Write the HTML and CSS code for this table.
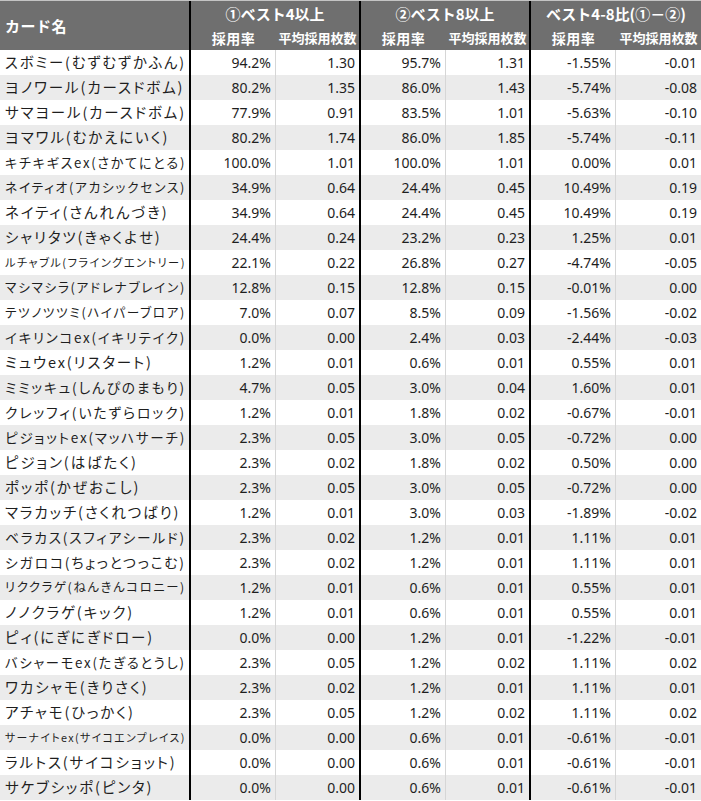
FILE: index.html
```html
<!DOCTYPE html>
<html lang="ja">
<head>
<meta charset="utf-8">
<title>採用率表</title>
<link rel="stylesheet" href="styles.css">
</head>
<body>
<div class="sheet">
  <div class="head">
    <div class="h-name">カード名</div>
    <div class="h-group sep">①ベスト4以上</div>
    <div class="h-group sep">②ベスト8以上</div>
    <div class="h-group">ベスト4-8比(①－②)</div>
    <div class="h-sub">採用率</div><div class="h-sub long sep">平均採用枚数</div>
    <div class="h-sub">採用率</div><div class="h-sub long sep">平均採用枚数</div>
    <div class="h-sub">採用率</div><div class="h-sub long">平均採用枚数</div>
  </div>
  <div class="body">
    <div class="row"><div class="name"><span>スボミー(むずむずかふん)</span></div><div class="num">94.2%</div><div class="num sep">1.30</div><div class="num">95.7%</div><div class="num sep">1.31</div><div class="num">-1.55%</div><div class="num last">-0.01</div></div>
    <div class="row"><div class="name"><span>ヨノワール(カースドボム)</span></div><div class="num">80.2%</div><div class="num sep">1.35</div><div class="num">86.0%</div><div class="num sep">1.43</div><div class="num">-5.74%</div><div class="num last">-0.08</div></div>
    <div class="row"><div class="name"><span>サマヨール(カースドボム)</span></div><div class="num">77.9%</div><div class="num sep">0.91</div><div class="num">83.5%</div><div class="num sep">1.01</div><div class="num">-5.63%</div><div class="num last">-0.10</div></div>
    <div class="row"><div class="name"><span>ヨマワル(むかえにいく)</span></div><div class="num">80.2%</div><div class="num sep">1.74</div><div class="num">86.0%</div><div class="num sep">1.85</div><div class="num">-5.74%</div><div class="num last">-0.11</div></div>
    <div class="row"><div class="name"><span>キチキギスex(さかてにとる)</span></div><div class="num">100.0%</div><div class="num sep">1.01</div><div class="num">100.0%</div><div class="num sep">1.01</div><div class="num">0.00%</div><div class="num last">0.01</div></div>
    <div class="row"><div class="name"><span>ネイティオ(アカシックセンス)</span></div><div class="num">34.9%</div><div class="num sep">0.64</div><div class="num">24.4%</div><div class="num sep">0.45</div><div class="num">10.49%</div><div class="num last">0.19</div></div>
    <div class="row"><div class="name"><span>ネイティ(さんれんづき)</span></div><div class="num">34.9%</div><div class="num sep">0.64</div><div class="num">24.4%</div><div class="num sep">0.45</div><div class="num">10.49%</div><div class="num last">0.19</div></div>
    <div class="row"><div class="name"><span>シャリタツ(きゃくよせ)</span></div><div class="num">24.4%</div><div class="num sep">0.24</div><div class="num">23.2%</div><div class="num sep">0.23</div><div class="num">1.25%</div><div class="num last">0.01</div></div>
    <div class="row"><div class="name"><span>ルチャブル(フライングエントリー)</span></div><div class="num">22.1%</div><div class="num sep">0.22</div><div class="num">26.8%</div><div class="num sep">0.27</div><div class="num">-4.74%</div><div class="num last">-0.05</div></div>
    <div class="row"><div class="name"><span>マシマシラ(アドレナブレイン)</span></div><div class="num">12.8%</div><div class="num sep">0.15</div><div class="num">12.8%</div><div class="num sep">0.15</div><div class="num">-0.01%</div><div class="num last">0.00</div></div>
    <div class="row"><div class="name"><span>テツノツツミ(ハイパーブロア)</span></div><div class="num">7.0%</div><div class="num sep">0.07</div><div class="num">8.5%</div><div class="num sep">0.09</div><div class="num">-1.56%</div><div class="num last">-0.02</div></div>
    <div class="row"><div class="name"><span>イキリンコex(イキリテイク)</span></div><div class="num">0.0%</div><div class="num sep">0.00</div><div class="num">2.4%</div><div class="num sep">0.03</div><div class="num">-2.44%</div><div class="num last">-0.03</div></div>
    <div class="row"><div class="name"><span>ミュウex(リスタート)</span></div><div class="num">1.2%</div><div class="num sep">0.01</div><div class="num">0.6%</div><div class="num sep">0.01</div><div class="num">0.55%</div><div class="num last">0.01</div></div>
    <div class="row"><div class="name"><span>ミミッキュ(しんぴのまもり)</span></div><div class="num">4.7%</div><div class="num sep">0.05</div><div class="num">3.0%</div><div class="num sep">0.04</div><div class="num">1.60%</div><div class="num last">0.01</div></div>
    <div class="row"><div class="name"><span>クレッフィ(いたずらロック)</span></div><div class="num">1.2%</div><div class="num sep">0.01</div><div class="num">1.8%</div><div class="num sep">0.02</div><div class="num">-0.67%</div><div class="num last">-0.01</div></div>
    <div class="row"><div class="name"><span>ピジョットex(マッハサーチ)</span></div><div class="num">2.3%</div><div class="num sep">0.05</div><div class="num">3.0%</div><div class="num sep">0.05</div><div class="num">-0.72%</div><div class="num last">0.00</div></div>
    <div class="row"><div class="name"><span>ピジョン(はばたく)</span></div><div class="num">2.3%</div><div class="num sep">0.02</div><div class="num">1.8%</div><div class="num sep">0.02</div><div class="num">0.50%</div><div class="num last">0.00</div></div>
    <div class="row"><div class="name"><span>ポッポ(かぜおこし)</span></div><div class="num">2.3%</div><div class="num sep">0.05</div><div class="num">3.0%</div><div class="num sep">0.05</div><div class="num">-0.72%</div><div class="num last">0.00</div></div>
    <div class="row"><div class="name"><span>マラカッチ(さくれつばり)</span></div><div class="num">1.2%</div><div class="num sep">0.01</div><div class="num">3.0%</div><div class="num sep">0.03</div><div class="num">-1.89%</div><div class="num last">-0.02</div></div>
    <div class="row"><div class="name"><span>ベラカス(スフィアシールド)</span></div><div class="num">2.3%</div><div class="num sep">0.02</div><div class="num">1.2%</div><div class="num sep">0.01</div><div class="num">1.11%</div><div class="num last">0.01</div></div>
    <div class="row"><div class="name"><span>シガロコ(ちょっとつっこむ)</span></div><div class="num">2.3%</div><div class="num sep">0.02</div><div class="num">1.2%</div><div class="num sep">0.01</div><div class="num">1.11%</div><div class="num last">0.01</div></div>
    <div class="row"><div class="name"><span>リククラゲ(ねんきんコロニー)</span></div><div class="num">1.2%</div><div class="num sep">0.01</div><div class="num">0.6%</div><div class="num sep">0.01</div><div class="num">0.55%</div><div class="num last">0.01</div></div>
    <div class="row"><div class="name"><span>ノノクラゲ(キック)</span></div><div class="num">1.2%</div><div class="num sep">0.01</div><div class="num">0.6%</div><div class="num sep">0.01</div><div class="num">0.55%</div><div class="num last">0.01</div></div>
    <div class="row"><div class="name"><span>ピィ(にぎにぎドロー)</span></div><div class="num">0.0%</div><div class="num sep">0.00</div><div class="num">1.2%</div><div class="num sep">0.01</div><div class="num">-1.22%</div><div class="num last">-0.01</div></div>
    <div class="row"><div class="name"><span>バシャーモex(たぎるとうし)</span></div><div class="num">2.3%</div><div class="num sep">0.05</div><div class="num">1.2%</div><div class="num sep">0.02</div><div class="num">1.11%</div><div class="num last">0.02</div></div>
    <div class="row"><div class="name"><span>ワカシャモ(きりさく)</span></div><div class="num">2.3%</div><div class="num sep">0.02</div><div class="num">1.2%</div><div class="num sep">0.01</div><div class="num">1.11%</div><div class="num last">0.01</div></div>
    <div class="row"><div class="name"><span>アチャモ(ひっかく)</span></div><div class="num">2.3%</div><div class="num sep">0.05</div><div class="num">1.2%</div><div class="num sep">0.02</div><div class="num">1.11%</div><div class="num last">0.02</div></div>
    <div class="row"><div class="name"><span>サーナイトex(サイコエンプレイス)</span></div><div class="num">0.0%</div><div class="num sep">0.00</div><div class="num">0.6%</div><div class="num sep">0.01</div><div class="num">-0.61%</div><div class="num last">-0.01</div></div>
    <div class="row"><div class="name"><span>ラルトス(サイコショット)</span></div><div class="num">0.0%</div><div class="num sep">0.00</div><div class="num">0.6%</div><div class="num sep">0.01</div><div class="num">-0.61%</div><div class="num last">-0.01</div></div>
    <div class="row"><div class="name"><span>サケブシッポ(ピンタ)</span></div><div class="num">0.0%</div><div class="num sep">0.00</div><div class="num">0.6%</div><div class="num sep">0.01</div><div class="num">-0.61%</div><div class="num last">-0.01</div></div>
  </div>
</div>
<script src="script.js"></script>
</body>
</html>
```

FILE: styles.css
```css
* { box-sizing: border-box; }

html, body {
  margin: 0;
  padding: 0;
  background: #ffffff;
}

body {
  font-family: "Noto Sans", "Noto Sans CJK JP", sans-serif;
  color: #1e1e1e;
}

.sheet {
  width: 701px;
  border-top: 1px solid #c4c4c4;
}

.head {
  display: grid;
  grid-template-columns: 191px repeat(6, 85px);
  grid-template-rows: 24px 25px;
  background: #6f6f6f;
  color: #ffffff;
  font-family: "Noto Sans CJK JP", sans-serif;
  font-weight: 700;
}

.h-name {
  grid-row: 1 / 3;
  display: flex;
  align-items: center;
  padding-left: 5px;
  font-size: 15px;
  letter-spacing: 0.5px;
  border-right: 2px solid #000;
}

.h-group {
  grid-column: span 2;
  display: flex;
  align-items: center;
  justify-content: center;
  font-size: 15px;
  padding-top: 1px;
}

.h-sub {
  display: flex;
  align-items: center;
  justify-content: center;
  font-size: 14px;
  letter-spacing: 0.5px;
}

.h-sub.long {
  font-size: 13px;
  letter-spacing: 0;
}

.sep {
  border-right: 2px solid #000;
}

.row {
  display: grid;
  grid-template-columns: 191px repeat(6, 85px);
  height: 25px;
  background: #ffffff;
}

.row:nth-child(even) {
  background: #ebebeb;
}

.name {
  display: flex;
  align-items: center;
  padding-left: 5px;
  border-right: 2px solid #000;
  white-space: nowrap;
  overflow: hidden;
}

.name span {
  display: inline-block;
  font-family: "Noto Sans CJK JP", sans-serif;
  font-size: 14.5px;
  letter-spacing: 0.13em;
  font-feature-settings: "palt";
  line-height: 1;
}

.num {
  display: flex;
  align-items: center;
  justify-content: flex-end;
  padding-right: 4px;
  font-size: 14px;
  border-right: 1px solid #d6d6d6;
}

.num.sep {
  border-right: 2px solid #000;
}

.num.last {
  border-right: none;
}
```

FILE: script.js
```js
// Shrink-to-fit for the name column, as the spreadsheet does.
(function () {
  var max = 181;
  var base = 14.5;
  var spans = document.querySelectorAll('.name span');
  spans.forEach(function (s) {
    var w = s.getBoundingClientRect().width;
    if (w > max) {
      var size = base * max / w;
      s.style.fontSize = size.toFixed(2) + 'px';
    }
  });
})();
```
